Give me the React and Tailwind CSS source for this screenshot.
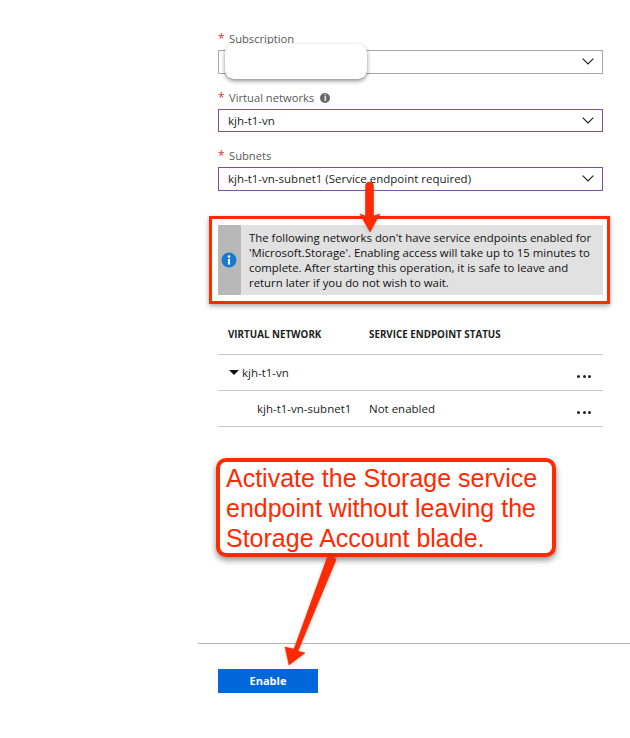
import React from 'react';

const Chevron = () => (
  <svg width="12" height="7" viewBox="0 0 12 7" fill="none" stroke="#222" strokeWidth="1.2" className="shrink-0">
    <path d="M0.7 0.7 L6 6 L11.3 0.7" />
  </svg>
);

const Label = ({ children, info }) => (
  <div className="flex items-center h-[16px] text-[11.2px] leading-[16px] text-[#595959]">
    <span className="w-[11px] text-[12px] text-[#d9392f]">*</span>
    <span>{children}</span>
    {info && (
      <span className="ml-[6px] flex h-[10px] w-[10px] items-center justify-center rounded-full bg-[#666] text-[8px] font-bold leading-none text-white">
        i
      </span>
    )}
  </div>
);

const Select = ({ value, plain }) => (
  <div
    className={`mt-[3px] flex h-[23.5px] items-center justify-between border pl-[9px] pr-[8px] text-[11.5px] text-[#222] ${
      plain ? 'border-[#a6a6a6]' : 'border-[#7f4fa8]'
    }`}
  >
    <span>{value}</span>
    <Chevron />
  </div>
);

const Dots = () => (
  <div className="flex gap-[2.5px] pt-[7px]">
    <span className="h-[3px] w-[3px] rounded-full bg-[#222]" />
    <span className="h-[3px] w-[3px] rounded-full bg-[#222]" />
    <span className="h-[3px] w-[3px] rounded-full bg-[#222]" />
  </div>
);

const App = () => {
  return (
    <div className="relative h-[738px] w-[630px] overflow-hidden bg-white font-['Open_Sans',sans-serif]">
      <div className="ml-[198px] flex h-full flex-col">
        <div className="flex-none pl-[20px] pr-[27px] pt-[31px]">
          <Label>Subscription</Label>
          <Select value="" plain />

          <div className="mt-[16px]">
            <Label info>Virtual networks</Label>
            <Select value="kjh-t1-vn" />
          </div>

          <div className="mt-[16px]">
            <Label>Subnets</Label>
            <Select value="kjh-t1-vn-subnet1 (Service endpoint required)" />
          </div>

          <div className="mt-[34.5px] flex h-[70px] bg-[#e1e1e1]">
            <div className="w-[23px] shrink-0 bg-[#b8b8b8]" />
            <div className="px-[8px] pt-[5px] text-[11.4px] leading-[15px] text-[#111]">
              The following networks don't have service endpoints enabled for 'Microsoft.Storage'. Enabling access will take up to 15 minutes to complete. After starting this operation, it is safe to leave and return later if you do not wish to wait.
            </div>
          </div>

          <div className="mt-[20px] flex h-[40px] items-center border-b border-[#c8c8c8] pt-[1px] text-[9.8px] font-bold text-[#222]">
            <span className="w-[151px] pl-[10px]">VIRTUAL NETWORK</span>
            <span>SERVICE ENDPOINT STATUS</span>
          </div>
          <div className="flex h-[36px] items-center justify-between border-b border-[#c8c8c8] pl-[11px] pr-[12px] text-[11.5px] text-[#222]">
            <div className="flex items-center gap-[3px]">
              <span className="h-0 w-0 border-x-[5px] border-t-[5px] border-x-transparent border-t-[#111]" />
              <span>kjh-t1-vn</span>
            </div>
            <Dots />
          </div>
          <div className="flex h-[36px] items-center border-b border-[#c8c8c8] pr-[12px] text-[11.5px] text-[#222]">
            <span className="w-[151px] pl-[39px]">kjh-t1-vn-subnet1</span>
            <span>Not enabled</span>
            <div className="ml-auto">
              <Dots />
            </div>
          </div>
        </div>

        <div className="mt-[216px] border-t border-[#b5b5b5] pl-[20px] pt-[25px]">
          <button className="block h-[24px] w-[100px] bg-[#0067db] text-[11px] font-bold text-white">Enable</button>
        </div>
      </div>

      {/* annotations on top of the screenshot */}
      <div className="absolute left-[225px] top-[44px] h-[35px] w-[142px] rounded-[9px] bg-white shadow-[0_2px_4px_rgba(0,0,0,0.45)]" />

      <div className="absolute left-[209px] top-[216px] h-[88px] w-[401px] border-[3px] border-[#ff2a00] shadow-[0_2px_5px_rgba(0,0,0,0.35)]" />

      <svg className="absolute left-[355px] top-[178px] drop-shadow-sm" width="30" height="58" viewBox="0 0 30 58">
        <path d="M10.5 8 Q10.5 4 14.5 4 Q18.5 4 18.5 8 L18.5 38 L25 36 L15 54 L5 36 L10.5 38 Z" fill="#ff2a00" stroke="#d92400" strokeWidth="0.5" />
      </svg>

      <div className="absolute left-[216px] top-[458px] h-[99px] w-[340px] rounded-[10px] border-[4px] border-[#ff2a00] bg-white pl-[6px] pt-[1px] font-['Liberation_Sans',sans-serif] text-[25px] leading-[30px] text-[#ff2a00] shadow-[0_3px_6px_rgba(0,0,0,0.45)]">
        Activate the Storage service<br />endpoint without leaving the<br />Storage Account blade.
      </div>

      <svg className="absolute left-[280px] top-[552px] drop-shadow-sm" width="60" height="116" viewBox="0 0 60 116">
        <path d="M47 6 Q50 1 54 4 L56 8 L18 99 L25 101 L9 113 L5 95 L14 97 Z" fill="#ff2a00" stroke="#d92400" strokeWidth="0.5" />
      </svg>

      <svg className="absolute left-[221px] top-[252px]" width="16" height="16" viewBox="0 0 16 16">
        <circle cx="8" cy="8" r="7.5" fill="#1479cf" />
        <circle cx="8" cy="4.5" r="1.3" fill="#fff" />
        <rect x="6.9" y="6.8" width="2.2" height="5.8" fill="#fff" />
      </svg>
    </div>
  );
};

export default App;
